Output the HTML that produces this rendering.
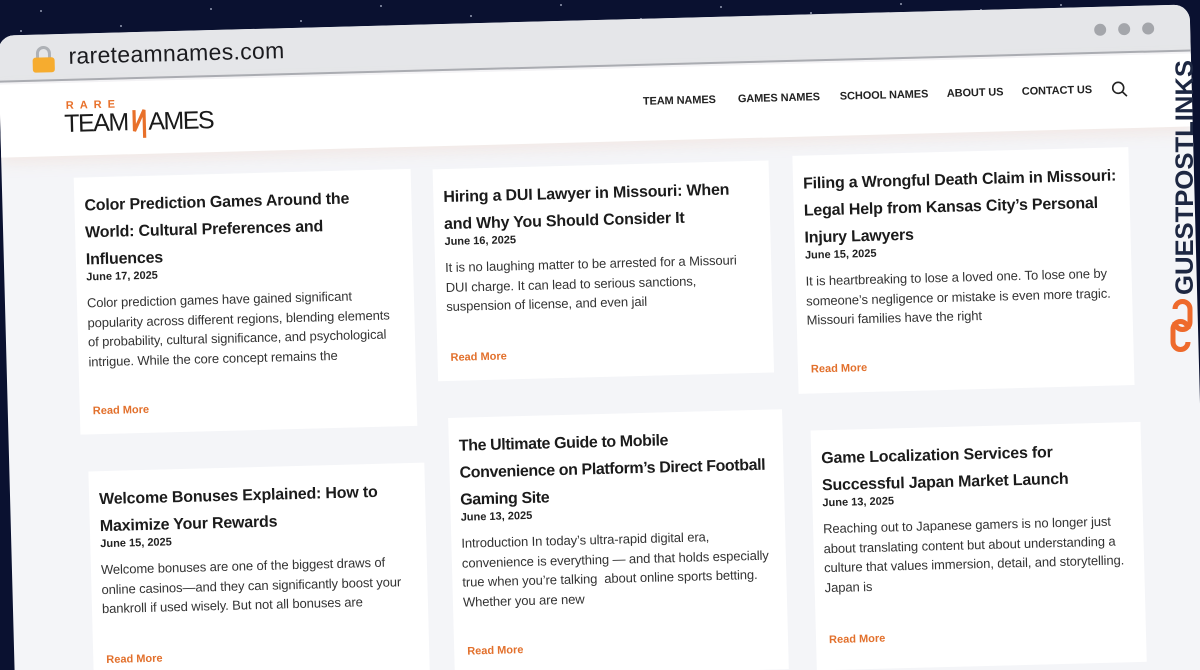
<!DOCTYPE html>
<html><head><meta charset="utf-8"><style>
*{margin:0;padding:0;box-sizing:border-box}
html,body{width:1200px;height:670px;overflow:hidden;background:#0a1130;font-family:"Liberation Sans",Arial,sans-serif}
.outer{position:relative;width:1200px;height:670px;overflow:hidden}
.stars{position:absolute;left:0;top:0;width:1200px;height:60px}
.stars i{position:absolute;width:2px;height:2px;background:#cfd6ea;border-radius:50%;opacity:.7}
.wrap{position:absolute;left:0;top:0;width:1200px;height:670px;transform:rotate(-1.5deg);transform-origin:600px 335px}
.frame{position:absolute;left:6px;top:20px;width:1192px;height:668px;background:#f4f5f8;border-radius:16px 16px 0 0;overflow:hidden}
.bar{position:absolute;left:0;top:0;width:100%;height:47px;background:#e5e6e9;border-bottom:2px solid #a9acb2}
.url{position:absolute;left:70px;top:9px;font-size:23px;color:#1b1b1f;letter-spacing:.3px}
.lock{position:absolute;left:33px;top:11px}
.dots{position:absolute;right:36px;top:16px}
.dots b{display:inline-block;width:12px;height:12px;border-radius:50%;background:#a4a6ab;margin-left:12px}
.head{position:absolute;left:0;top:49px;width:100%;height:73px;background:#fff;box-shadow:0 6px 14px rgba(240,200,180,.25)}
.logo{position:absolute;left:64px;top:14px}
.nav{position:absolute;top:28px;left:637px;font-size:11px;font-weight:bold;color:#222;letter-spacing:-.1px}
.nav span{position:absolute;white-space:nowrap}
.card{position:absolute;background:#fff;padding:15px 10px 10px 10px}
.card h2{font-size:16px;line-height:27px;color:#1b1b1b;font-weight:bold;letter-spacing:-.2px}
.card .d{font-size:11px;font-weight:bold;color:#222;margin-top:-2px}
.card p{font-size:13px;line-height:19.5px;color:#333;margin-top:10px;letter-spacing:-.1px;width:312px}
.card a{position:absolute;left:13px;font-size:11px;font-weight:bold;color:#e2702c;text-decoration:none}
.gp{position:absolute;left:1160px;top:55px;width:40px;height:300px}
</style></head><body><div class="outer">
<div class="stars">
<i style="left:40px;top:10px"></i><i style="left:120px;top:25px"></i><i style="left:210px;top:8px"></i><i style="left:300px;top:20px"></i><i style="left:380px;top:5px"></i><i style="left:470px;top:15px"></i><i style="left:560px;top:4px"></i><i style="left:640px;top:18px"></i><i style="left:720px;top:6px"></i><i style="left:810px;top:12px"></i><i style="left:900px;top:3px"></i><i style="left:980px;top:9px"></i><i style="left:1060px;top:4px"></i><i style="left:160px;top:40px"></i><i style="left:20px;top:30px"></i>
</div>
<div class="wrap">
<div class="frame">
 <div class="bar">
  <svg class="lock" width="24" height="28" viewBox="0 0 24 28"><path d="M6 13V8a6 6 0 0 1 12 0v5" fill="none" stroke="#aeb1b6" stroke-width="3"/><rect x="1" y="12" width="22" height="15" rx="3" fill="#f6ac2f"/></svg>
  <div class="url">rareteamnames.com</div>
  <div class="dots"><b></b><b></b><b></b></div>
 </div>
 <div class="head">
  <svg class="logo" width="160" height="44" viewBox="0 0 160 44">
   <text x="2" y="12" font-family="Liberation Sans" font-size="11" font-weight="bold" fill="#e8702a" letter-spacing="6">RARE</text>
   <text x="0" y="35" font-family="Liberation Sans" font-size="25" fill="#1a1a1a" letter-spacing="-1.5">TEAM</text>
   <path d="M70 15 L70 36 L80 15 L80 43" fill="none" stroke="#e8702a" stroke-width="3.2"/>
   <text x="84" y="35" font-family="Liberation Sans" font-size="25" fill="#1a1a1a" letter-spacing="-1.5">AMES</text>
  </svg>
  <div class="nav">
   <span style="left:6px">TEAM NAMES</span><span style="left:101px">GAMES NAMES</span><span style="left:203px">SCHOOL NAMES</span><span style="left:310px">ABOUT US</span><span style="left:385px">CONTACT US</span>
  </div>
  <svg style="position:absolute;left:1111px;top:25px" width="18" height="18" viewBox="0 0 18 18"><circle cx="7.5" cy="7.5" r="5.5" fill="none" stroke="#222" stroke-width="1.6"/><path d="M11.5 11.5 L16 16" stroke="#222" stroke-width="1.6"/></svg>
 </div>

 <div class="card" style="left:72px;top:144px;width:337px;height:257px">
  <h2>Color Prediction Games Around the World: Cultural Preferences and Influences</h2>
  <div class="d">June 17, 2025</div>
  <p>Color prediction games have gained significant popularity across different regions, blending elements of probability, cultural significance, and psychological intrigue. While the core concept remains the</p>
  <a style="top:228px">Read More</a>
 </div>
 <div class="card" style="left:431px;top:145px;width:336px;height:212px">
  <h2>Hiring a DUI Lawyer in Missouri: When and Why You Should Consider It</h2>
  <div class="d">June 16, 2025</div>
  <p>It is no laughing matter to be arrested for a Missouri DUI charge. It can lead to serious sanctions, suspension of license, and even jail</p>
  <a style="top:183px">Read More</a>
 </div>
 <div class="card" style="left:791px;top:141px;width:336px;height:238px">
  <h2>Filing a Wrongful Death Claim in Missouri: Legal Help from Kansas City’s Personal Injury Lawyers</h2>
  <div class="d">June 15, 2025</div>
  <p>It is heartbreaking to lose a loved one. To lose one by someone’s negligence or mistake is even more tragic. Missouri families have the right</p>
  <a style="top:208px">Read More</a>
 </div>
 <div class="card" style="left:79px;top:438px;width:336px;height:240px">
  <h2>Welcome Bonuses Explained: How to Maximize Your Rewards</h2>
  <div class="d">June 15, 2025</div>
  <p>Welcome bonuses are one of the biggest draws of online casinos—and they can significantly boost your bankroll if used wisely. But not all bonuses are</p>
  <a style="top:183px">Read More</a>
 </div>
 <div class="card" style="left:440px;top:394px;width:334px;height:260px">
  <h2 style="letter-spacing:-.4px;white-space:nowrap">The Ultimate Guide to Mobile<br>Convenience on Platform’s Direct Football<br>Gaming Site</h2>
  <div class="d">June 13, 2025</div>
  <p>Introduction In today’s ultra-rapid digital era, convenience is everything — and that holds especially true when you’re talking&nbsp; about online sports betting. Whether you are new</p>
  <a style="top:228px">Read More</a>
 </div>
 <div class="card" style="left:802px;top:416px;width:330px;height:240px">
  <h2>Game Localization Services for Successful Japan Market Launch</h2>
  <div class="d">June 13, 2025</div>
  <p>Reaching out to Japanese gamers is no longer just about translating content but about understanding a culture that values immersion, detail, and storytelling. Japan is</p>
  <a style="top:204px">Read More</a>
 </div>
</div>
</div>
<svg class="gp" viewBox="0 0 40 300">
 <text transform="translate(33,240) rotate(-90)" font-family="Liberation Sans" font-weight="bold" font-size="25" fill="#1d2742" textLength="235" lengthAdjust="spacingAndGlyphs">GUESTPOSTLINKS</text>
 <g fill="none" stroke="#ee6a2c" stroke-width="5">
  <path d="M15 254 a7.5 7.5 0 0 1 15 0 v13 a7.5 7.5 0 0 1 -15 0"/>
  <path d="M28 287 a7.5 7.5 0 0 1 -15 0 v-13 a7.5 7.5 0 0 1 15 0"/>
 </g>
</svg>
</div></body></html>
